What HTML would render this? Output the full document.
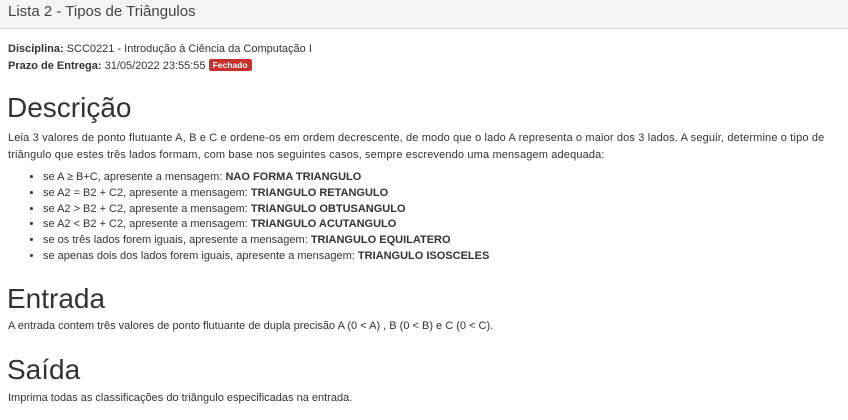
<!DOCTYPE html>
<html><head><meta charset="utf-8"><style>
body{margin:0;width:848px;height:420px;overflow:hidden;background:#fff;font-family:"Liberation Sans",sans-serif;color:#333;font-size:11px;}
.hdr{position:absolute;left:0;top:0;width:848px;height:28px;background:#f5f5f5;border-bottom:1px solid #ddd;}
.hdr span{position:absolute;left:8px;top:3px;font-size:15px;color:#444;}
.a{position:absolute;left:8px;white-space:nowrap;}
h1{position:absolute;left:7px;margin:0;font-weight:normal;font-size:28px;color:#333;}
.badge{background:#c9302c;color:#fff;font-weight:bold;font-size:8.5px;padding:1px 4px;border-radius:2px;position:relative;top:-1px}
ul{position:absolute;left:23px;top:170px;margin:0;padding-left:20px;line-height:15.8px;}
li{white-space:nowrap}
</style></head><body>
<div class="hdr"><span>Lista 2 - Tipos de Triângulos</span></div>
<div class="a" style="top:43px"><b>Disciplina:</b> SCC0221 - Introdução à Ciência da Computação I</div>
<div class="a" style="top:60px"><b>Prazo de Entrega:</b> 31/05/2022 23:55:55 <span class="badge">Fechado</span></div>
<h1 style="top:92px">Descrição</h1>
<div class="a" style="top:130px;line-height:17px;letter-spacing:0.15px">Leia 3 valores de ponto flutuante A, B e C e ordene-os em ordem decrescente, de modo que o lado A representa o maior dos 3 lados. A seguir, determine o tipo de<br>triângulo que estes três lados formam, com base nos seguintes casos, sempre escrevendo uma mensagem adequada:</div>
<ul>
<li>se A ≥ B+C, apresente a mensagem: <b>NAO FORMA TRIANGULO</b></li>
<li>se A2 = B2 + C2, apresente a mensagem: <b>TRIANGULO RETANGULO</b></li>
<li>se A2 &gt; B2 + C2, apresente a mensagem: <b>TRIANGULO OBTUSANGULO</b></li>
<li>se A2 &lt; B2 + C2, apresente a mensagem: <b>TRIANGULO ACUTANGULO</b></li>
<li>se os três lados forem iguais, apresente a mensagem: <b>TRIANGULO EQUILATERO</b></li>
<li>se apenas dois dos lados forem iguais, apresente a mensagem: <b>TRIANGULO ISOSCELES</b></li>
</ul>
<h1 style="top:283px">Entrada</h1>
<div class="a" style="top:320px">A entrada contem três valores de ponto flutuante de dupla precisão A (0 &lt; A) , B (0 &lt; B) e C (0 &lt; C).</div>
<h1 style="top:354px">Saída</h1>
<div class="a" style="top:392px">Imprima todas as classificações do triângulo especificadas na entrada.</div>
</body></html>
